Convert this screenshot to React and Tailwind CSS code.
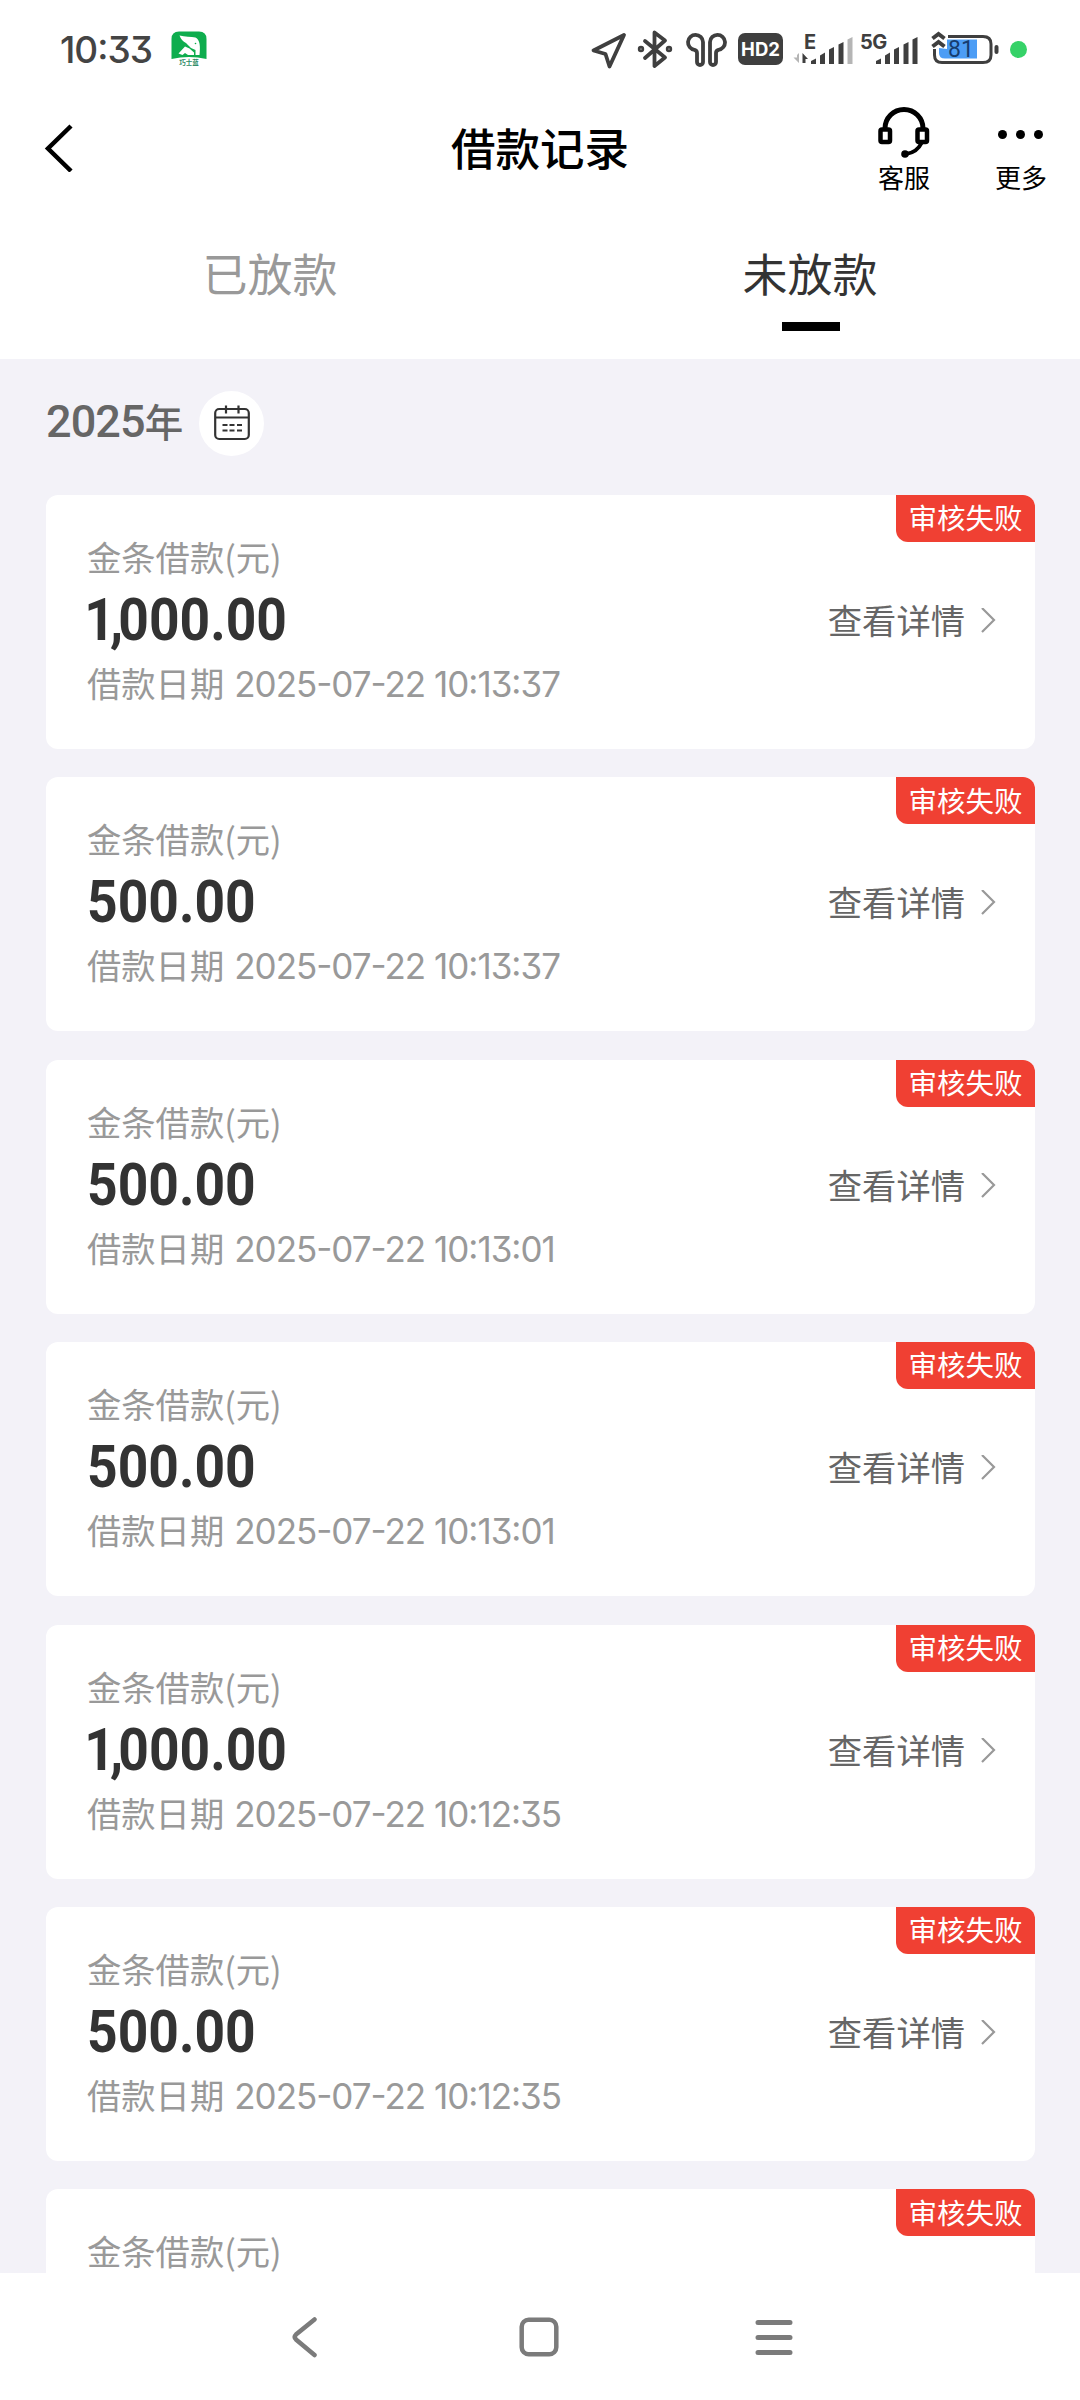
import clsx from 'clsx'

const CJK = "font-['Noto_Sans_CJK_SC',sans-serif]"
const NUM = "font-['Inter','Noto_Sans_CJK_SC',sans-serif] [font-feature-settings:'cv09','calt']"

const records = [
  { amount: '1,000.00', time: '2025-07-22 10:13:37' },
  { amount: '500.00', time: '2025-07-22 10:13:37' },
  { amount: '500.00', time: '2025-07-22 10:13:01' },
  { amount: '500.00', time: '2025-07-22 10:13:01' },
  { amount: '1,000.00', time: '2025-07-22 10:12:35' },
  { amount: '500.00', time: '2025-07-22 10:12:35' },
  {},
]

function AppLogo() {
  return (
    <svg className="ml-[19px] h-[36px] w-[36px]" viewBox="0 0 36 36">
      <path d="M0.5 28V8Q0.5 0.5 8 0.5H28Q35.5 0.5 35.5 8V28Q18 24 0.5 28Z" fill="#0ead4e" />
      <path d="M8.5 4.5C14 6 20 5.5 24.5 6.5C29 9 29.5 15 28.5 24H24.5V19L20 17L15 12Q10.5 10 8.5 4.5Z" fill="#fff" />
      <path d="M7.5 22.5L14 15.5L18.5 17.5L23 21.5V24H17L14 22L11.5 24Z" fill="#fff" />
      <circle cx="24.5" cy="12.5" r="0.8" fill="#0ead4e" />
      <text x="18" y="33.5" fontSize="6.5" fontWeight="700" textAnchor="middle" fill="#2b8a65" className={CJK}>巧士蓝</text>
    </svg>
  )
}

function SignalBars({ last }) {
  return (
    <g fill="#3f3f3f">
      <path d="M0 27V24L5 21.5V27Z" />
      <path d="M9 27V18.5L14 15.5V27Z" />
      <path d="M18 27V12.5L23 10V27Z" />
      <path d="M27.5 27V7.5L32.5 5V27Z" />
      <path d="M36.5 27V2.5L41.5 0V27Z" fill={last} />
    </g>
  )
}

function StatusBar() {
  return (
    <div className="flex h-[98px] items-center pl-[60px] pr-[53px]">
      <span className={clsx(NUM, 'w-[92px] whitespace-nowrap text-[37px] font-medium leading-none tracking-[-1px] text-[#444]')}>10:33</span>
      <AppLogo />

      <div className="ml-auto flex items-center">
        <svg className="h-[40px] w-[38px]" viewBox="0 0 38 40" fill="none" stroke="#3f3f3f" strokeWidth="3.8" strokeLinejoin="round">
          <path d="M34 6L3.5 21.500L15.500 25L19.500 37.500Z" />
        </svg>
        <svg className="ml-[9px] h-[40px] w-[36px]" viewBox="0 0 36 40" fill="none" stroke="#3f3f3f" strokeWidth="3.8" strokeLinecap="round" strokeLinejoin="round">
          <path d="M8 12L28 28.5L17.5 37V3.5L28 11.5L8 29" />
          <circle cx="4" cy="20" r="1.3" />
          <circle cx="32" cy="20" r="1.3" />
        </svg>
        <svg className="ml-[12px] h-[40px] w-[42px]" viewBox="0 0 42 40" fill="none" stroke="#3f3f3f" strokeWidth="3.8">
          <path d="M18 13A7.5 7.5 0 1 0 9.5 20.8Q12 21.5 12 24V33A3 3 0 0 0 18 33Z" />
          <path d="M25 13A7.5 7.5 0 1 1 33.5 20.8Q31 21.5 31 24V33A3 3 0 0 1 25 33Z" />
        </svg>
        <div className={clsx(NUM, 'ml-[11px] flex h-[32px] w-[45px] items-center justify-center rounded-[7px] bg-[#3f3f3f] text-[18.5px] font-bold leading-none text-white')}>
          HD2
        </div>

        <svg className="ml-[10px] h-[36px] w-[62px]" viewBox="0 0 62 36">
          <text x="11" y="18" fontSize="20" fontWeight="700" fill="#3f3f3f" className={NUM}>E</text>
          <path d="M6 22V32L0.5 26.5H4V24Z" fill="#b5b5b5" />
          <path d="M9.5 22L15 28H12.5V32H9.5Z" fill="#3f3f3f" />
          <g transform="translate(18 6)"><SignalBars last="#b5b5b5" /></g>
        </svg>
        <svg className="ml-[4px] h-[36px] w-[60px]" viewBox="0 0 60 36">
          <text x="1" y="18" fontSize="20" fontWeight="700" letterSpacing="-0.5" fill="#3f3f3f" className={NUM}>5G</text>
          <g transform="translate(17 6)"><SignalBars last="#3f3f3f" /></g>
        </svg>

        <svg className="ml-[12px] h-[36px] w-[70px]" viewBox="0 0 70 36">
          <path d="M17 5.500H52Q60 5.500 60 13V24Q60 31.500 52 31.500H11Q3.500 31.500 3.500 24V18" fill="none" stroke="#3f3f3f" strokeWidth="3" />
          <path d="M8 17L16 18V8.5H46V27.5H14Q8 27.5 8 22Z" fill="#4c9df5" />
          <path d="M1.5 7.5L7.5 3L13.5 7.5M1.5 15.5L7.5 11L13.5 15.5" fill="none" stroke="#3f3f3f" strokeWidth="4" />
          <rect x="63.5" y="14" width="4" height="9" rx="2" fill="#3f3f3f" />
          <text x="30" y="26" fontSize="23" textAnchor="middle" fill="#173d70" className="font-['Roboto',sans-serif]">81</text>
        </svg>
        <span className="ml-[9px] h-[17px] w-[17px] rounded-full bg-[#36d268]" />
      </div>
    </div>
  )
}

function Header() {
  return (
    <header className="grid h-[104px] grid-cols-[1fr_auto_1fr] items-center px-[33px] pb-[2px]">
      <svg className="-ml-px mb-[2px] h-[48px] w-[48px]" viewBox="0 0 48 48" fill="none" stroke="#000" strokeWidth="4.5">
        <path d="M39 2L16 24.5L39 47" />
      </svg>
      <h1 className={clsx(CJK, 'pb-[4px] text-[44.5px] font-medium leading-none text-black')}>借款记录</h1>
      <div className="flex items-start justify-end gap-[65px]">
        <div className="flex w-[52px] flex-col items-center">
          <svg className="h-[56px] w-[52px]" viewBox="0 0 52 56" fill="none" stroke="#000">
            <path d="M7 22V21.5A19 19 0 0 1 45 21.5V22" strokeWidth="5" />
            <rect x="2.5" y="22.5" width="9.5" height="12.5" rx="1.5" strokeWidth="4.5" />
            <rect x="39.5" y="22.5" width="9.5" height="12.5" rx="1.5" strokeWidth="4.5" />
            <path d="M43.5 36Q39 45.5 28 47" strokeWidth="4" />
            <circle cx="27" cy="47" r="3.8" fill="#000" stroke="none" />
          </svg>
          <span className={clsx(CJK, 'whitespace-nowrap text-[26px] leading-[28px]')}>客服</span>
        </div>
        <div className="flex w-[52px] flex-col items-center">
          <svg className="h-[56px] w-[52px]" viewBox="0 0 52 56">
            <circle cx="7.5" cy="27.5" r="4.5" />
            <circle cx="25.5" cy="27.5" r="4.5" />
            <circle cx="43.5" cy="27.5" r="4.5" />
          </svg>
          <span className={clsx(CJK, 'whitespace-nowrap text-[26px] leading-[28px]')}>更多</span>
        </div>
      </div>
    </header>
  )
}

function Tabs() {
  return (
    <nav className={clsx(CJK, 'grid h-[157px] grid-cols-2 text-center text-[45px]')}>
      <div className="flex flex-col items-center pt-[39px] text-[#999]">
        <span className="leading-[64px]">已放款</span>
      </div>
      <div className="flex flex-col items-center pt-[39px] text-[#333]">
        <span className="leading-[64px]">未放款</span>
        <span className="ml-[2px] mt-[17px] h-[9px] w-[58px] bg-black" />
      </div>
    </nav>
  )
}

function CalendarButton() {
  return (
    <span className="flex h-[65px] w-[65px] items-center justify-center rounded-full bg-white">
      <svg className="h-[36px] w-[36px]" viewBox="0 0 36 36" fill="none" stroke="#333" strokeWidth="2.2">
        <rect x="1.2" y="4" width="33.6" height="30" rx="4" />
        <path d="M1 12.5H35M12 0.5V8.5M24.5 0.5V8.5" />
        <path d="M8.5 20H13.5M15.5 20H20.5M23 20H28M8.5 25.5H13.5M15.5 25.5H20.5M23 25.5H28" />
      </svg>
    </span>
  )
}

function Amount({ value }) {
  const [head, tail] = value.includes(',') ? value.split(',') : ['', value]
  return (
    <span className="origin-left scale-x-[0.89] font-['Roboto',sans-serif] text-[60px] font-bold leading-[88px] text-[#333]">
      {head && <span className="-ml-[3px] tracking-[-5.5px]">{head},</span>}
      {tail}
    </span>
  )
}

function RecordCard({ amount, time }) {
  return (
    <li className="relative flex h-[254px] shrink-0 items-start justify-between rounded-[12px] bg-white pl-[41px] pr-[39px]">
      <span className={clsx(CJK, 'absolute right-0 top-0 flex h-[47px] w-[139px] items-center justify-center rounded-bl-[12px] rounded-tr-[12px] bg-[#f04033] pb-[2px] text-[28.5px] leading-none text-white')}>
        审核失败
      </span>
      <div className="flex flex-col whitespace-nowrap pt-[41px] text-[#999]">
        <span className={clsx(CJK, 'text-[34.3px] leading-[40px]')}>金条借款(元)</span>
        {amount && (
          <>
            <Amount value={amount} />
            <div className="-mt-[4px] flex items-center">
              <span className={clsx(CJK, 'pb-[4px] text-[34.3px] leading-[44px]')}>借款日期</span>
              <span className={clsx(NUM, 'ml-[10px] text-[35px] leading-[44px] tracking-[-1px]')}>{time}</span>
            </div>
          </>
        )}
      </div>
      {amount && (
        <div className="flex h-full items-center">
          <span className={clsx(CJK, 'pb-[6px] text-[34.3px] leading-[50px] text-[#666]')}>查看详情</span>
          <svg className="mb-[2px] ml-[15px] h-[26px] w-[16px]" viewBox="0 0 16 26" fill="none" stroke="#999" strokeWidth="2.2">
            <path d="M2 1L14 13L2 25" transform="translate(0 -1)" />
          </svg>
        </div>
      )}
    </li>
  )
}

function NavBar() {
  return (
    <footer className="flex h-[127px] shrink-0 items-center bg-white pl-[290px]">
      <svg className="h-[42px] w-[28px]" viewBox="0 0 28 42" fill="none" stroke="#7b7b7b" strokeWidth="4.5" strokeLinecap="round">
        <path d="M24.5 3.500L6 18.500Q3.500 21 6 23.500L24.500 39" />
      </svg>
      <svg className="ml-[200px] h-[42px] w-[42px]" viewBox="0 0 42 42" fill="none" stroke="#7b7b7b" strokeWidth="4.5">
        <rect x="3.7" y="3.7" width="34.6" height="34.6" rx="7" />
      </svg>
      <svg className="ml-[195px] h-[42px] w-[38px]" viewBox="0 0 38 42" stroke="#7b7b7b" strokeWidth="5" strokeLinecap="round">
        <path d="M3 6.500H35M3 21.500H35M3 36.500H35" />
      </svg>
    </footer>
  )
}

export default function App() {
  return (
    <div className="flex h-[2400px] w-[1080px] flex-col overflow-hidden bg-[#f3f2f8]">
      <div className="shrink-0 bg-white">
        <StatusBar />
        <Header />
        <Tabs />
      </div>

      <main className="min-h-0 flex-1 overflow-hidden pl-[46px] pr-[45px]">
        <div className="flex h-[136px] items-center pb-[8px]">
          <div className="flex w-[153px] items-center whitespace-nowrap pb-[3px] text-[#666]">
            <span className="font-['Roboto',sans-serif] text-[45px] font-medium leading-none tracking-[-0.9px]">2025</span>
            <span className={clsx(CJK, 'pb-[3px] text-[38.5px] font-medium leading-none')}>年</span>
          </div>
          <CalendarButton />
        </div>
        <ul className="flex flex-col gap-[28.4px]">
          {records.map((record, i) => (
            <RecordCard key={i} {...record} />
          ))}
        </ul>
      </main>

      <NavBar />
    </div>
  )
}
